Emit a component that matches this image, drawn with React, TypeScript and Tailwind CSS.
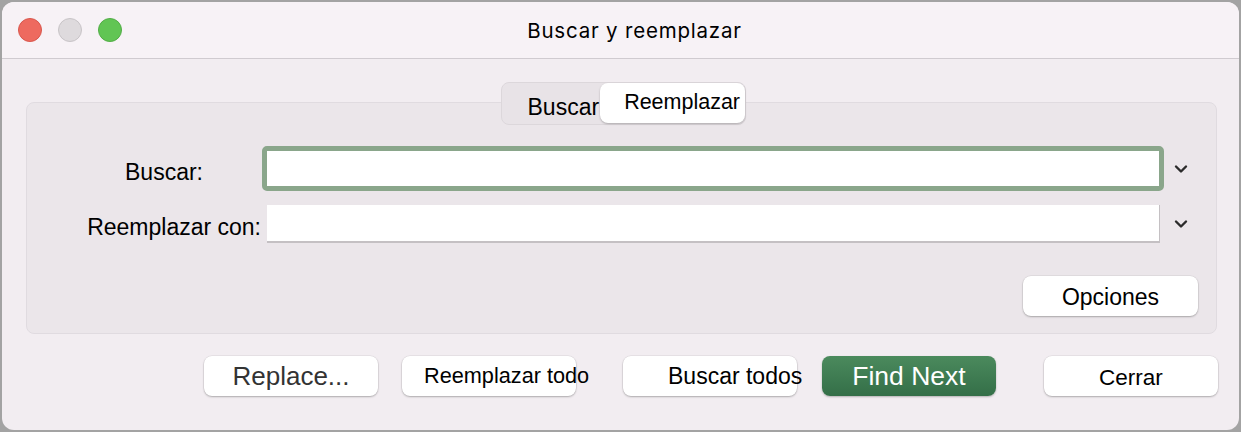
import React from "react";

const Chevron: React.FC = () => (
  <svg width="14" height="10" viewBox="0 0 14 10" className="shrink-0">
    <path d="M2 2.5 L7 7.5 L12 2.5" fill="none" stroke="#2b2b2b" strokeWidth="2.4" strokeLinecap="round" strokeLinejoin="round" />
  </svg>
);

const btn =
  "h-[40px] w-[174px] shrink-0 rounded-[8px] bg-white shadow-[0_1px_2px_rgba(0,0,0,0.25),0_0_0_0.5px_rgba(0,0,0,0.08)] flex items-center justify-center whitespace-nowrap";

export default function App() {
  return (
    <div
      className="w-[1241px] h-[432px] bg-[#a3a3a3] p-[2px] overflow-hidden"
      style={{ fontFamily: '"Liberation Sans", Arial, sans-serif' }}
    >
      <div className="h-full w-full rounded-[12px] bg-[#f2edf1] overflow-hidden flex flex-col">
        {/* Title bar */}
        <div className="h-[57px] shrink-0 bg-[#f7f2f6] border-b border-[#d0cbd0] flex items-center px-[16px]">
          <div className="flex gap-[16px]">
            <span className="w-[24px] h-[24px] rounded-full bg-[#ee6a5f] border border-[#d9574d]" />
            <span className="w-[24px] h-[24px] rounded-full bg-[#dedadd] border border-[#c8c4c7]" />
            <span className="w-[24px] h-[24px] rounded-full bg-[#61c554] border border-[#52ad46]" />
          </div>
          <div
            className="flex-1 text-center text-[20.5px] tracking-[0.8px] text-black pr-[76px] pt-[2px]"
            style={{ fontFamily: "Inter, sans-serif" }}
          >
            Buscar y reemplazar
          </div>
        </div>

        {/* Body */}
        <div className="flex-1 px-[24px] pt-[23px]">
          {/* Tabs */}
          <div className="relative z-10 flex justify-center pl-[5px] -mb-[23px]">
            <div className="h-[43px] w-[245px] rounded-[8px] bg-[#e8e3e7] border border-[#dcd7db] flex items-center pl-[26px]">
              <span className="text-[23px] text-black w-[73px] pt-[7px]">Buscar</span>
              <div className="h-[40px] w-[145px] rounded-[8px] bg-white shadow-[0_1px_2px_rgba(0,0,0,0.25)] flex items-center pl-[24px] text-[21.5px] text-black -mt-[2px]">
                Reemplazar
              </div>
            </div>
          </div>

          {/* Panel */}
          <div className="h-[232px] w-[1191px] rounded-[8px] bg-[#ebe6ea] border border-[#e0dbe0] pt-[43px]">
            <div className="flex items-center">
              <div className="w-[235px] pr-[59px] pt-[6px] leading-[28px] text-right text-[23px] text-black">Buscar:</div>
              <div className="w-[902px] h-[45px] rounded-[5px] border-[5px] border-[#8aa68b] bg-white" />
              <div className="ml-[10px]">
                <Chevron />
              </div>
            </div>
            <div className="flex items-center mt-[14px]">
              <div className="w-[240px] pr-[6px] pt-[6px] leading-[28px] text-right text-[23px] text-black whitespace-nowrap">
                Reemplazar con:
              </div>
              <div className="w-[893px] h-[38px] bg-white border-b-2 border-r border-[#c4c0c3]" />
              <div className="ml-[14px]">
                <Chevron />
              </div>
            </div>
            <div className="flex justify-end pr-[18px] mt-[33px]">
              <div className={btn + " w-[175px] text-[23px] text-black pt-[2px]"}>Opciones</div>
            </div>
          </div>

          {/* Bottom buttons */}
          <div className="flex mt-[22px]">
            <div className={btn + " ml-[178px] text-[26px] text-[#333]"}>Replace...</div>
            <div className={btn + " ml-[24px] text-[21.7px] text-black justify-start pl-[22px]"}>
              Reemplazar todo
            </div>
            <div className={btn + " ml-[47px] text-[23px] text-black justify-start pl-[45px]"}>
              Buscar todos
            </div>
            <div className="ml-[25px] h-[40px] w-[174px] shrink-0 rounded-[8px] bg-gradient-to-b from-[#4b8a5d] to-[#346f48] shadow-[0_1px_2px_rgba(0,0,0,0.25)] flex items-start justify-center pt-[1px] text-[26.5px] text-white">
              Find Next
            </div>
            <div className={btn + " ml-[48px] text-[22.5px] text-black pt-[4px]"}>Cerrar</div>
          </div>
        </div>
      </div>
    </div>
  );
}
